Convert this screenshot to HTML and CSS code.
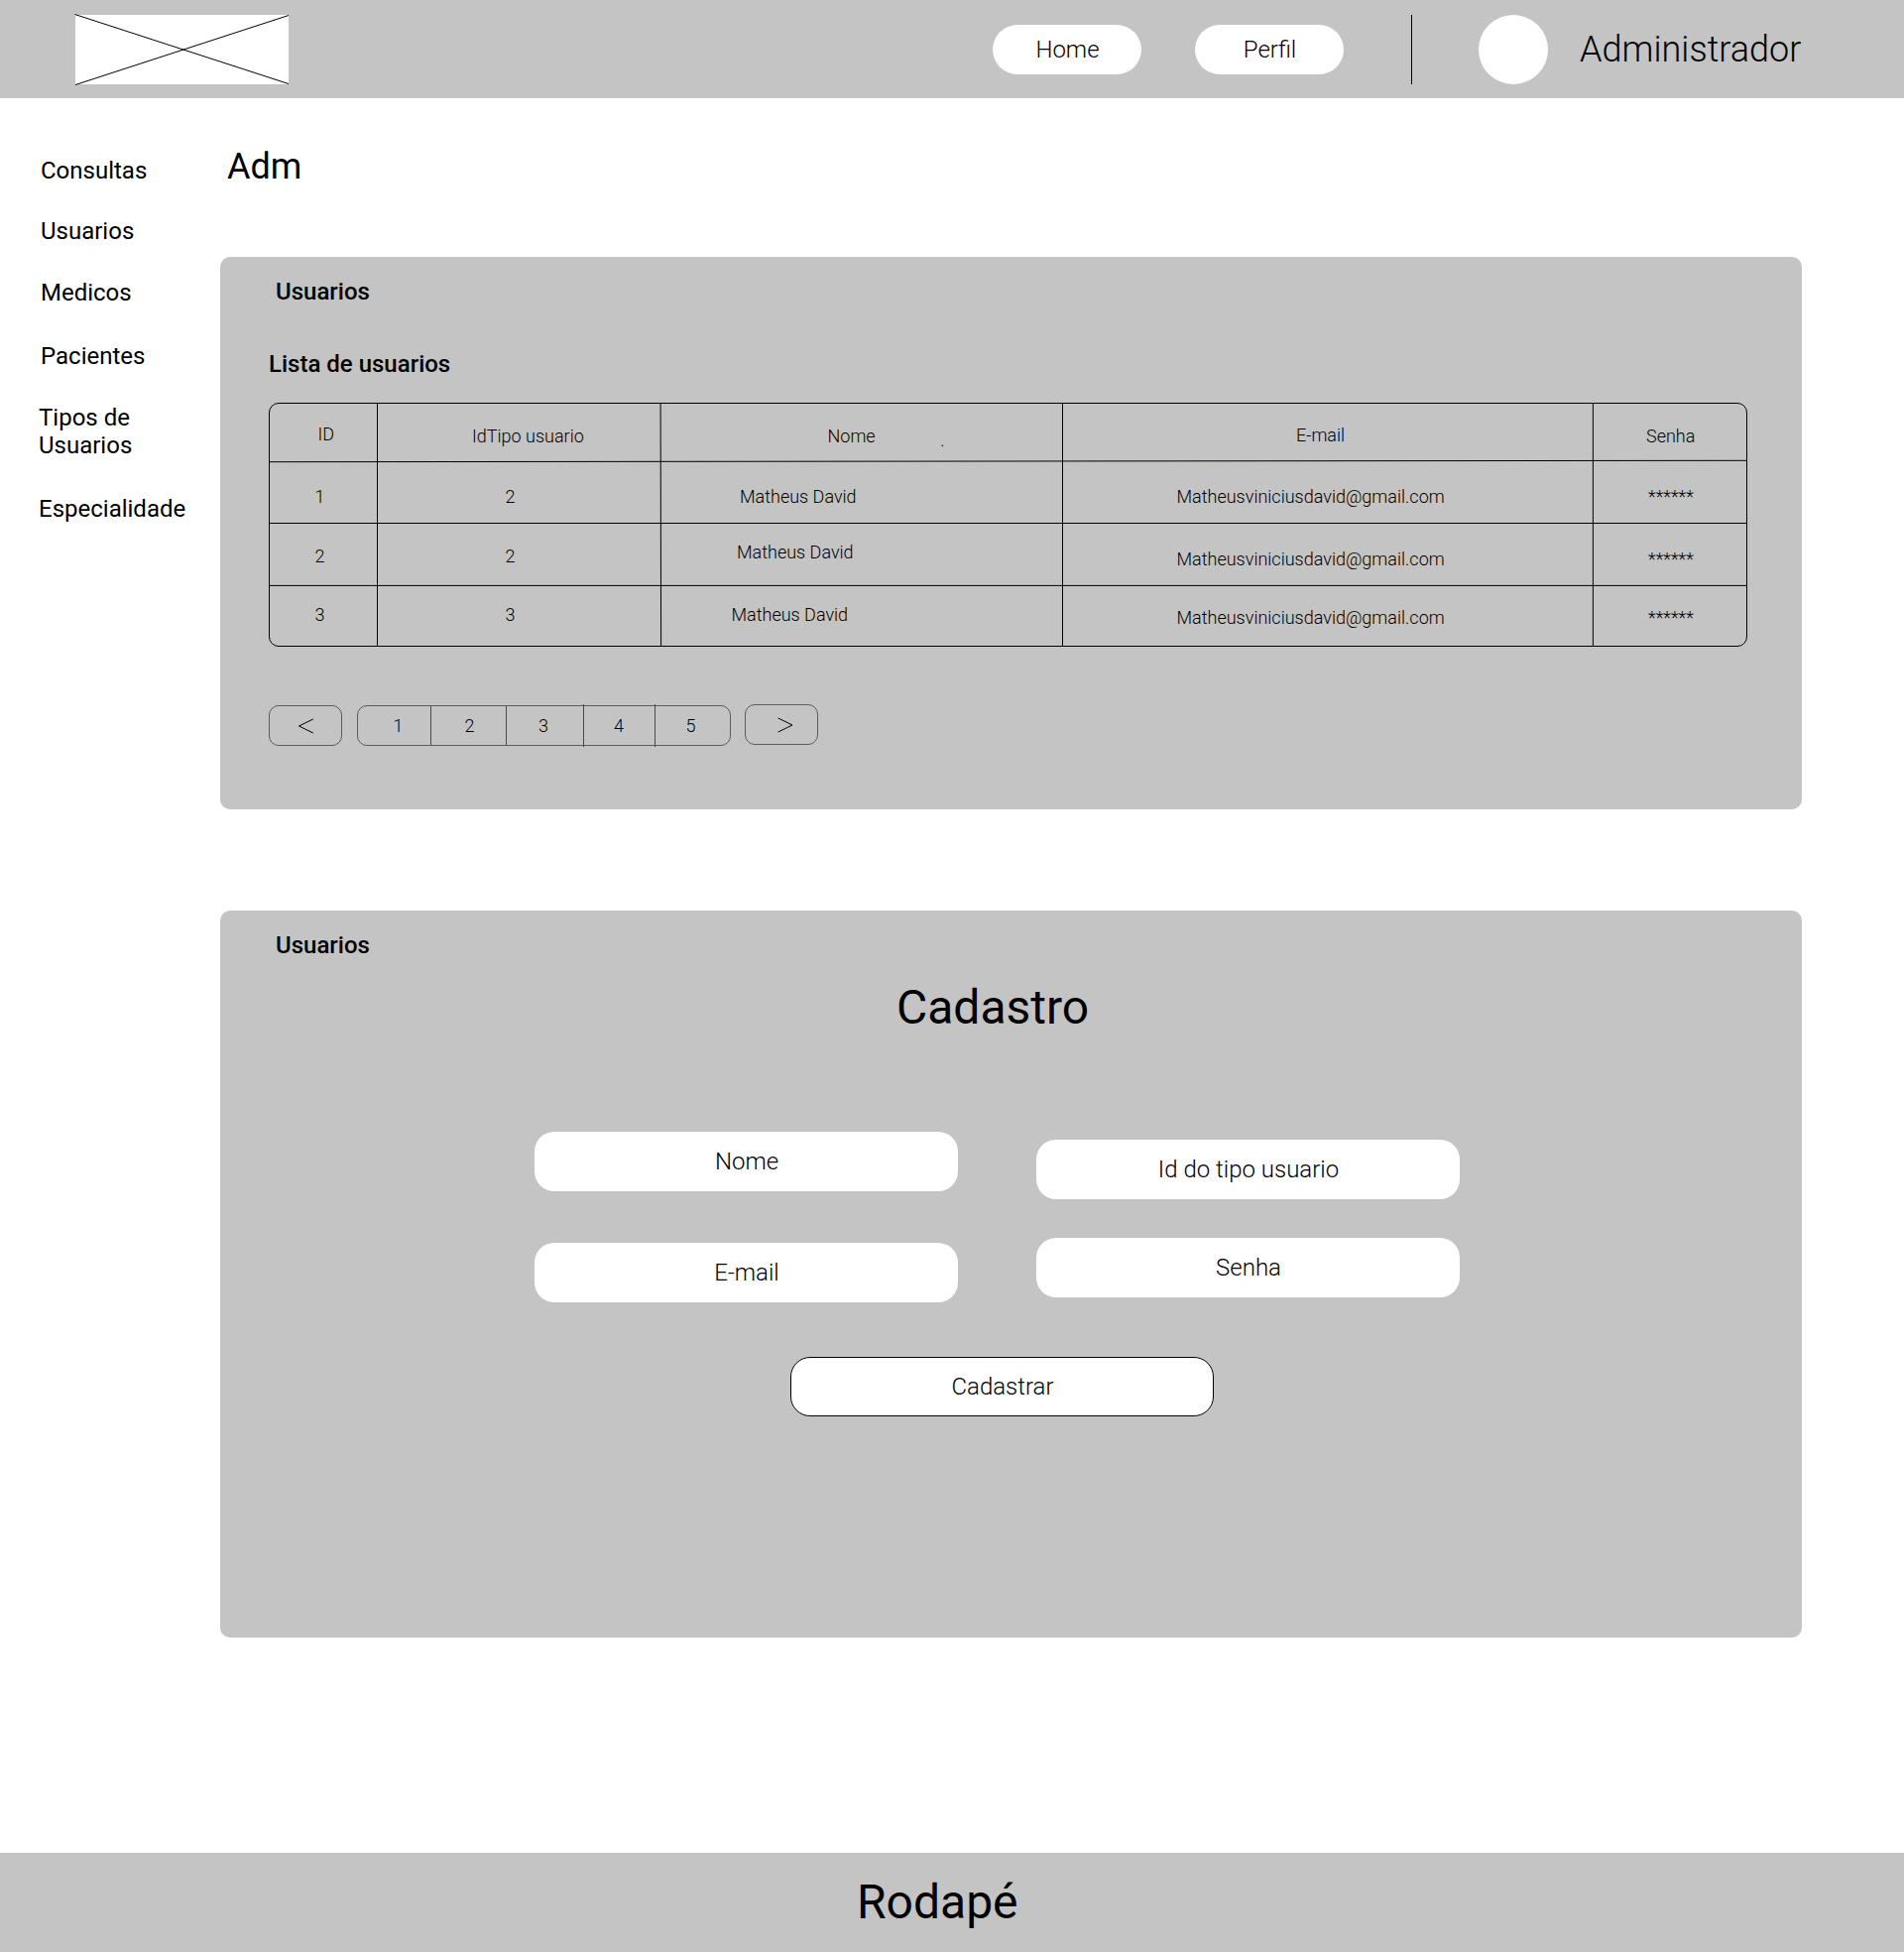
FILE: index.html
```html
<!DOCTYPE html>
<html lang="pt-BR">
<head>
  <meta charset="utf-8">
  <title>Adm</title>
  <link rel="stylesheet" href="styles.css">
</head>
<body>
  <header class="topbar">
    <svg class="logo" width="215" height="70" viewBox="0 0 215 70">
      <rect width="215" height="70" fill="#fff"/>
      <path d="M-.5-.5 215 69.5M0 70.5 215 .5" stroke="#000" fill="none"/>
    </svg>
    <nav class="topnav">
      <a class="pill">Home</a>
      <a class="pill">Perfil</a>
    </nav>
    <div class="user">
      <span class="avatar"></span>
      <span class="user-name">Administrador</span>
    </div>
  </header>

  <div class="layout">
    <aside class="sidebar">
      <a>Consultas</a>
      <a>Usuarios</a>
      <a>Medicos</a>
      <a>Pacientes</a>
      <a>Tipos de<br>Usuarios</a>
      <a>Especialidade</a>
    </aside>

    <main class="content">
      <h1>Adm</h1>

      <section class="card card-list">
        <h2>Usuarios</h2>
        <h3>Lista de usuarios</h3>
        <div class="table">
          <div class="row head">
            <span>ID</span><span>IdTipo usuario</span><span>Nome<i class="dot">.</i></span><span>E-mail</span><span>Senha</span>
          </div>
          <div class="row first">
            <span>1</span><span>2</span><span>Matheus David</span><span>Matheusviniciusdavid@gmail.com</span><span>******</span>
          </div>
          <div class="row second">
            <span>2</span><span>2</span><span>Matheus David</span><span>Matheusviniciusdavid@gmail.com</span><span>******</span>
          </div>
          <div class="row third">
            <span>3</span><span>3</span><span>Matheus David</span><span>Matheusviniciusdavid@gmail.com</span><span>******</span>
          </div>
          <svg class="rules" width="1491" height="246" viewBox="0 0 1491 246">
            <path d="M0 59.7 1491 58.3M0 121.5H1491M0 184.4H1491M109.5 0V246M395.1 0 395.6 246M800.5 0V246M1335.4 0V246" stroke="#000" fill="none"/>
          </svg>
        </div>
        <div class="pager">
          <a class="step"><svg width="16" height="16" viewBox="0 0 16 16"><path d="M15.8 1 1.5 8l14.3 7" stroke="#000" fill="none"/></svg></a>
          <div class="pages"><a>1</a><a>2</a><a>3</a><a>4</a><a>5</a></div>
          <a class="step next"><svg width="16" height="16" viewBox="0 0 16 16"><path d="M.7 1 15 8 .7 15" stroke="#000" fill="none"/></svg></a>
        </div>
      </section>

      <section class="card card-form">
        <h2>Usuarios</h2>
        <div class="form-title">Cadastro</div>
        <div class="fields">
          <div class="column">
            <div class="field">Nome</div>
            <div class="field">E-mail</div>
          </div>
          <div class="column right">
            <div class="field">Id do tipo usuario</div>
            <div class="field">Senha</div>
          </div>
        </div>
        <div class="field submit">Cadastrar</div>
      </section>
    </main>
  </div>

  <footer class="footer">Rodapé</footer>
</body>
</html>
```
FILE: styles.css
```css
* { box-sizing: border-box; }

body {
  margin: 0;
  width: 1920px;
  height: 1968px;
  display: flex;
  flex-direction: column;
  background: #fff;
  color: #000;
  font-family: Roboto, sans-serif;
  font-size: 24px;
  line-height: 28px;
}

h1, h2, h3 { margin: 0; }

/* Top bar */
.topbar {
  height: 99px;
  padding: 15px 0 0 76px;
  display: flex;
  align-items: flex-start;
  background: #c4c4c4;
  font-weight: 300;
}

.logo { overflow: visible; }

.topnav {
  margin: 10px 0 0 710px;
  display: flex;
  gap: 54px;
}

.pill {
  width: 150px;
  height: 50px;
  padding-left: 1px;
  display: flex;
  align-items: center;
  justify-content: center;
  border-radius: 25px;
  background: #fff;
}

.user {
  height: 70px;
  margin-left: 68px;
  padding-left: 67px;
  display: flex;
  align-items: center;
  border-left: 1px solid #000;
}

.avatar {
  width: 70px;
  height: 70px;
  border-radius: 50%;
  background: #fff;
}

.user-name {
  margin-left: 32px;
  font-size: 36px;
  line-height: 42px;
}

/* Body */
.layout { display: flex; height: 1769px; }

.sidebar {
  width: 222px;
  padding: 59px 0 0 39px;
  display: flex;
  flex-direction: column;
}

.sidebar a { margin-bottom: 33px; padding-left: 2px; }
.sidebar a:nth-child(2) { margin-bottom: 34px; }
.sidebar a:nth-child(3) { margin-bottom: 36px; }
.sidebar a:nth-child(4) { margin-bottom: 34px; }
.sidebar a:nth-child(5) { margin-bottom: 36px; padding-left: 0; }
.sidebar a:nth-child(6) { padding-left: 0; }

.content { width: 1595px; padding-top: 48px; }

h1 {
  padding-left: 7px;
  font-size: 36px;
  font-weight: 400;
  line-height: 42px;
}

h2, h3 { font-size: 24px; font-weight: 500; }

.card {
  border-radius: 10px;
  background: #c4c4c4;
}

.card h2 { padding: 21px 0 0 56px; }

.card-list { height: 557px; margin-top: 70px; }
.card-list h3 { padding: 45px 0 0 49px; }

/* Users table */
.table {
  position: relative;
  width: 1491px;
  height: 246px;
  margin: 25px 0 0 49px;
  border: 1px solid #000;
  border-radius: 10px;
  font-size: 18px;
  font-weight: 300;
  line-height: 21px;
}

.rules { position: absolute; left: -1px; top: -1px; }

.row {
  display: grid;
  grid-template-columns: 109px 286px 405px 535px 154px;
}

.row span:nth-child(1) { padding-left: 45.5px; }
.row span:nth-child(2) { padding-left: 128.5px; }
.row span:nth-child(3) { padding-left: 79px; }
.row span:nth-child(4) { padding-left: 114.5px; }
.row span:nth-child(5) { padding-left: 55px; }

.row.head { height: 59px; padding-top: 22px; }
.head span:nth-child(1) { padding-left: 48.5px; margin-top: -2px; }
.head span:nth-child(2) { padding-left: 95px; }
.head span:nth-child(3) { padding-left: 167.5px; }
.head span:nth-child(4) { padding-left: 235px; margin-top: -1px; }
.head span:nth-child(5) { padding-left: 53px; }
.dot { position: relative; left: 65.5px; top: 4px; font-style: normal; }

.row.first { height: 62px; padding-top: 24px; }

.row.second { height: 63px; padding-top: 22px; }
.second span:nth-child(3) { padding-left: 76px; margin-top: -4px; }
.second span:nth-child(n+4) { margin-top: 3px; }

.row.third { height: 60px; padding-top: 18px; }
.third span:nth-child(3) { padding-left: 70.5px; }
.third span:nth-child(n+4) { margin-top: 3px; }

/* Pagination */
.pager {
  display: flex;
  align-items: flex-start;
  margin: 59px 0 0 49px;
  font-size: 18px;
  font-weight: 300;
  line-height: 21px;
}

.step {
  width: 74px;
  height: 41px;
  padding: 12px 0 0 28px;
  border: 1px solid #5c5c5c;
  border-radius: 10px;
}

.step svg { display: block; }
.step.next { margin-top: -1px; padding: 12px 0 0 32px; }

.pages {
  width: 377px;
  height: 41px;
  margin: 0 14px 0 15px;
  display: grid;
  grid-template-columns: 73px 76px 78px 72px 76px;
  border: 1px solid #5c5c5c;
  border-radius: 10px;
}

.pages a { padding: 9px 0 0 35.5px; }
.pages a + a { border-left: 1px solid #4a4a4a; padding-left: 33.5px; }
.pages a:nth-child(3) { padding-left: 32px; }
.pages a:nth-child(4) { margin: -2px 0; padding: 11px 0 0 30px; }
.pages a:nth-child(5) { margin: -2px 0; padding: 11px 0 0 30.5px; }

/* Registration form */
.card-form { height: 733px; margin-top: 102px; }

.form-title {
  margin-top: 20px;
  padding-left: 682px;
  font-size: 48px;
  line-height: 57px;
}

.fields {
  display: flex;
  gap: 79px;
  margin: 97px 0 0 317px;
}

.column {
  display: flex;
  flex-direction: column;
  gap: 52px;
}

.column.right { padding-top: 8px; gap: 39px; }

.field {
  width: 427px;
  height: 60px;
  padding-left: 1px;
  display: flex;
  align-items: center;
  justify-content: center;
  border-radius: 20px;
  background: #fff;
  font-weight: 300;
}

.submit { margin: 55px 0 0 575px; border: 1px solid #000; }

/* Footer */
.footer {
  height: 100px;
  padding: 21px 0 0 864px;
  background: #c4c4c4;
  font-size: 48px;
  line-height: 57px;
}
```
